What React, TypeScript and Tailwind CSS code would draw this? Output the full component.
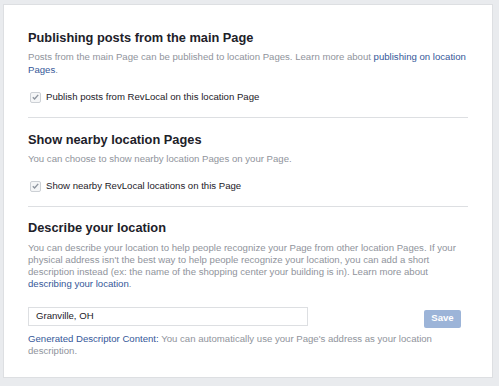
import React from 'react';

const font = { fontFamily: '"Liberation Sans", Arial, sans-serif' };

function Check({ label }: { label: string }) {
  return (
    <label className="mt-[15px] flex items-center text-[9.6px] leading-[12.5px] text-[#1d2129]">
      <span className="ml-[2px] flex h-[11px] w-[11px] items-center justify-center rounded-[2px] border border-[#ccd0d5] bg-[#f5f6f7]">
        <svg width="7" height="6" viewBox="0 0 7 6" fill="none">
          <path d="M0.8 3.2 L2.6 4.9 L6.2 0.9" stroke="#8d949e" strokeWidth="1.4" />
        </svg>
      </span>
      <span className="ml-[5px]">{label}</span>
    </label>
  );
}

function Heading({ children, className = '' }: { children: React.ReactNode; className?: string }) {
  return (
    <h2 className={`text-[12.8px] leading-[16px] font-bold text-[#1d2129] ${className}`}>{children}</h2>
  );
}

export default function App() {
  return (
    <div className="h-[386px] w-[499px] bg-[#e9ebee] pt-[4px] pl-[3px]" style={font}>
      <div className="h-[374px] w-[490px] border border-[#dddfe2] bg-white px-6 pt-[25px]">
        <Heading>Publishing posts from the main Page</Heading>
        <p className="mt-[5px] text-[9.6px] leading-[12.5px] text-[#90949c]">
          Posts from the main Page can be published to location Pages. Learn more about{' '}
          <span className="text-[#365899]">publishing on location Pages</span>.
        </p>
        <Check label="Publish posts from RevLocal on this location Page" />
        <div className="mt-[13px] h-px bg-[#dddfe2]" />

        <Heading className="mt-[14px]">Show nearby location Pages</Heading>
        <p className="mt-[5px] text-[9.6px] leading-[12.5px] text-[#90949c]">
          You can choose to show nearby location Pages on your Page.
        </p>
        <Check label="Show nearby RevLocal locations on this Page" />
        <div className="mt-[13px] h-px bg-[#dddfe2]" />

        <Heading className="mt-[13px]">Describe your location</Heading>
        <p className="mt-[6px] text-[9.6px] leading-[12.3px] text-[#90949c]">
          You can describe your location to help people recognize your Page from other location Pages. If your
          physical address isn't the best way to help people recognize your location, you can add a short
          description instead (ex: the name of the shopping center your building is in). Learn more about{' '}
          <span className="text-[#365899]">describing your location</span>.
        </p>
        <div className="mt-[16px] flex items-start">
          <div className="flex h-[19px] w-[280px] items-center border border-[#dddfe2] pl-[7px] text-[9.6px] text-[#1d2129]">
            Granville, OH
          </div>
          <button className="mt-[3px] ml-[116px] flex h-[18px] w-[37px] items-center justify-center rounded-[2px] bg-[#9cb4d8] text-[9.6px] font-bold text-white">
            Save
          </button>
        </div>
        <p className="mt-[5px] text-[9.6px] leading-[12.3px] text-[#90949c]">
          <span className="text-[#365899]">Generated Descriptor Content:</span> You can automatically use your Page's
          address as your location description.
        </p>
      </div>
    </div>
  );
}
